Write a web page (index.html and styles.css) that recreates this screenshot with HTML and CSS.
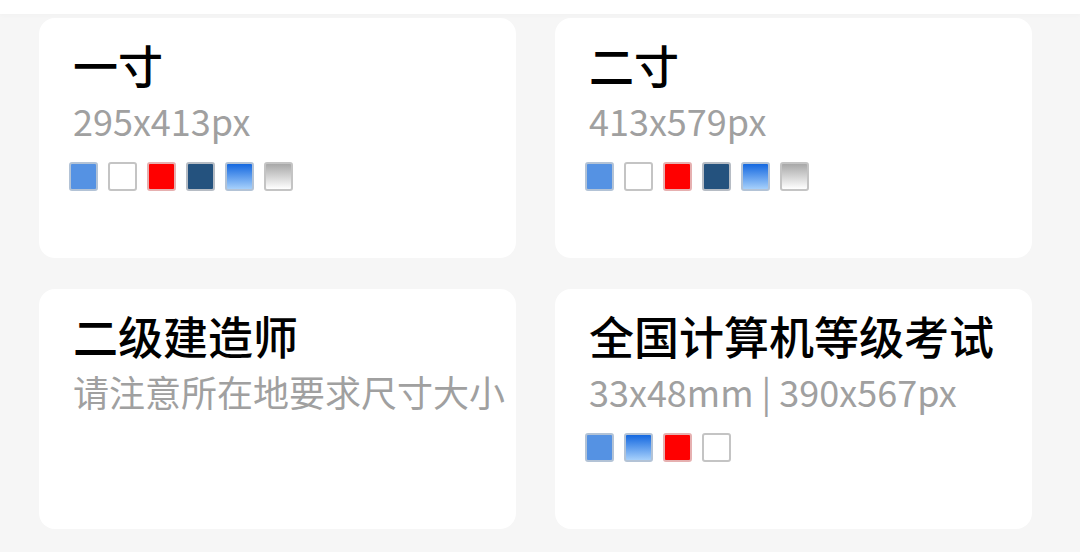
FILE: index.html
```html
<!DOCTYPE html>
<html lang="zh-CN">
<head>
  <meta charset="UTF-8">
  <meta name="viewport" content="width=device-width, initial-scale=1.0">
  <title>证件照规格</title>
  <link rel="stylesheet" href="styles.css">
</head>
<body>

<div class="topbar"></div>

<div class="grid">
  <div class="card">
    <h2>一寸</h2>
    <p class="size">295x413px</p>
    <div class="colors">
      <span class="c blue"></span>
      <span class="c white"></span>
      <span class="c red"></span>
      <span class="c navy"></span>
      <span class="c grad-blue"></span>
      <span class="c grad-gray"></span>
    </div>
  </div>

  <div class="card">
    <h2>二寸</h2>
    <p class="size">413x579px</p>
    <div class="colors">
      <span class="c blue"></span>
      <span class="c white"></span>
      <span class="c red"></span>
      <span class="c navy"></span>
      <span class="c grad-blue"></span>
      <span class="c grad-gray"></span>
    </div>
  </div>

  <div class="card">
    <h2>二级建造师</h2>
    <p class="size">请注意所在地要求尺寸大小</p>
  </div>

  <div class="card">
    <h2>全国计算机等级考试</h2>
    <p class="size">33x48mm | 390x567px</p>
    <div class="colors">
      <span class="c blue"></span>
      <span class="c grad-blue"></span>
      <span class="c red"></span>
      <span class="c white"></span>
    </div>
  </div>
</div>

</body>
</html>
```

FILE: styles.css
```css
body {
  margin: 0;
  font-family: "Noto Sans CJK SC", "Noto Sans", sans-serif;
  background-color: #f6f6f6;
}

.topbar {
  height: 14px;
  background-color: #fff;
  box-shadow: 0 2px 4px rgba(0, 0, 0, 0.02);
}

.grid {
  display: grid;
  grid-template-columns: 477px 477px;
  grid-auto-rows: 240px;
  gap: 31px 39px;
  padding: 4px 0 0 39px;
}

.card {
  background-color: #fff;
  border-radius: 16px;
  padding: 18px 34px;
  box-sizing: border-box;
}

.card h2 {
  margin: 0;
  font-size: 45px;
  font-weight: 500;
  line-height: 58px;
  color: #000;
}

.size {
  margin: 0;
  font-size: 36px;
  line-height: 52px;
  color: #a0a0a0;
  white-space: nowrap;
}

.colors {
  display: flex;
  gap: 10px;
  margin-top: 16px;
  margin-left: -4px;
}

.c {
  width: 29px;
  height: 29px;
  box-sizing: border-box;
  border: 2px solid #c4c4c4;
  border-radius: 3px;
}

.blue { background-color: #5592e3; border-color: #b3c3d6; }
.white { background-color: #fff; }
.red { background-color: #f00; border-color: #e6b0b0; }
.navy { background-color: #24527e; border-color: #b6bcc4; }
.grad-blue { background: linear-gradient(#1468e0, #a6d0fb); border-color: #b3c3d6; }
.grad-gray { background: linear-gradient(#a8a8a8, #fff); }
```
